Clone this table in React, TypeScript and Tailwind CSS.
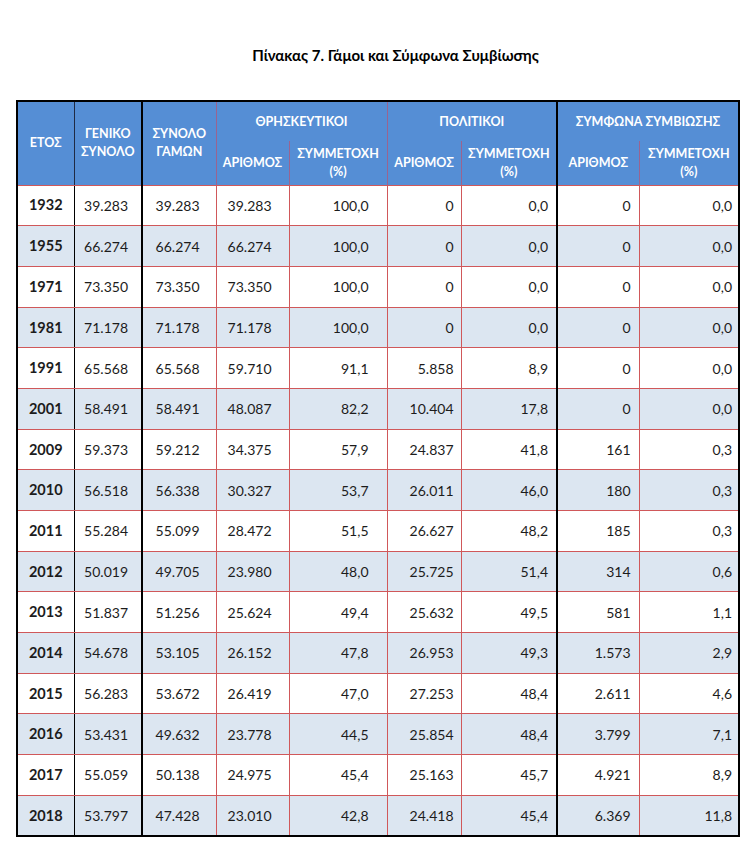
import React from "react";

const rows: string[][] = [
  ["1932", "39.283", "39.283", "39.283", "100,0", "0", "0,0", "0", "0,0"],
  ["1955", "66.274", "66.274", "66.274", "100,0", "0", "0,0", "0", "0,0"],
  ["1971", "73.350", "73.350", "73.350", "100,0", "0", "0,0", "0", "0,0"],
  ["1981", "71.178", "71.178", "71.178", "100,0", "0", "0,0", "0", "0,0"],
  ["1991", "65.568", "65.568", "59.710", "91,1", "5.858", "8,9", "0", "0,0"],
  ["2001", "58.491", "58.491", "48.087", "82,2", "10.404", "17,8", "0", "0,0"],
  ["2009", "59.373", "59.212", "34.375", "57,9", "24.837", "41,8", "161", "0,3"],
  ["2010", "56.518", "56.338", "30.327", "53,7", "26.011", "46,0", "180", "0,3"],
  ["2011", "55.284", "55.099", "28.472", "51,5", "26.627", "48,2", "185", "0,3"],
  ["2012", "50.019", "49.705", "23.980", "48,0", "25.725", "51,4", "314", "0,6"],
  ["2013", "51.837", "51.256", "25.624", "49,4", "25.632", "49,5", "581", "1,1"],
  ["2014", "54.678", "53.105", "26.152", "47,8", "26.953", "49,3", "1.573", "2,9"],
  ["2015", "56.283", "53.672", "26.419", "47,0", "27.253", "48,4", "2.611", "4,6"],
  ["2016", "53.431", "49.632", "23.778", "44,5", "25.854", "48,4", "3.799", "7,1"],
  ["2017", "55.059", "50.138", "24.975", "45,4", "25.163", "45,7", "4.921", "8,9"],
  ["2018", "53.797", "47.428", "23.010", "42,8", "24.418", "45,4", "6.369", "11,8"],
];

const cellCls = [
  "text-center font-bold border-r border-r-black text-[14.5px]",
  "text-right pr-[13px] border-r-2 border-r-black",
  "text-right pr-[16px] border-r border-r-[#d0585a]",
  "text-right pr-[17px] border-r border-r-[#d0585a]",
  "text-right pr-[18px] border-r border-r-[#d0585a]",
  "text-right pr-[7px] border-r border-r-[#d0585a]",
  "text-right pr-[8px] border-r-2 border-r-black",
  "text-right pr-[8px] border-r border-r-[#d0585a]",
  "text-right pr-[6px] border-r-2 border-r-black",
];

const widths = [57, 68, 74, 73, 98, 74, 96, 82, 100];

export default function App() {
  return (
    <div
      className="w-[751px] h-[841px] bg-white text-[#1c1c1c]"
      style={{ fontFamily: "Lato, 'Open Sans', 'Noto Sans', sans-serif" }}
    >
      <div className="h-[100px] pl-[40px] pt-[44px] text-center text-[15px] font-bold text-black">
        Πίνακας 7. Γάμοι και Σύμφωνα Συμβίωσης
      </div>
      <div className="pl-[16px]">
        <table className="table-fixed border-collapse border-2 border-black w-[724px]">
          <colgroup>
            {widths.map((w, i) => (
              <col key={i} style={{ width: w }} />
            ))}
          </colgroup>
          <thead className="bg-[#558ed5] text-white text-[12.5px] font-bold leading-[18px]">
            <tr className="h-[40px]">
              <th rowSpan={2} className="border-r border-r-[#1f2a44] border-b border-b-[#d0585a] font-bold">
                ΕΤΟΣ
              </th>
              <th rowSpan={2} className="border-r-2 border-r-black border-b border-b-[#d0585a] font-bold">
                ΓΕΝΙΚΟ
                <br />
                ΣΥΝΟΛΟ
              </th>
              <th rowSpan={2} className="border-r border-r-[#9a6490] border-b border-b-[#d0585a] font-bold">
                ΣΥΝΟΛΟ
                <br />
                ΓΑΜΩΝ
              </th>
              <th colSpan={2} className="border-r border-r-[#9a6490] font-bold">
                ΘΡΗΣΚΕΥΤΙΚΟΙ
              </th>
              <th colSpan={2} className="border-r-2 border-r-black font-bold">
                ΠΟΛΙΤΙΚΟΙ
              </th>
              <th colSpan={2} className="font-bold">
                ΣΥΜΦΩΝΑ ΣΥΜΒΙΩΣΗΣ
              </th>
            </tr>
            <tr className="h-[44px]">
              <th className="border-r border-r-[#9a6490] border-b border-b-[#d0585a] font-bold">ΑΡΙΘΜΟΣ</th>
              <th className="border-r border-r-[#9a6490] border-b border-b-[#d0585a] font-bold">
                ΣΥΜΜΕΤΟΧΗ
                <br />
                (%)
              </th>
              <th className="border-r border-r-[#9a6490] border-b border-b-[#d0585a] font-bold">ΑΡΙΘΜΟΣ</th>
              <th className="border-r-2 border-r-black border-b border-b-[#d0585a] font-bold">
                ΣΥΜΜΕΤΟΧΗ
                <br />
                (%)
              </th>
              <th className="border-r border-r-[#9a6490] border-b border-b-[#d0585a] font-bold">ΑΡΙΘΜΟΣ</th>
              <th className="border-b border-b-[#d0585a] font-bold">
                ΣΥΜΜΕΤΟΧΗ
                <br />
                (%)
              </th>
            </tr>
          </thead>
          <tbody className="text-[14px]">
            {rows.map((r, ri) => (
              <tr key={r[0]} className={`h-[40.7px] ${ri % 2 === 1 ? "bg-[#dce6f1]" : "bg-white"}`}>
                {r.map((v, ci) => (
                  <td key={ci} className={`${cellCls[ci]} border-b border-b-[#d0585a]`}>
                    {v}
                  </td>
                ))}
              </tr>
            ))}
          </tbody>
        </table>
      </div>
    </div>
  );
}
